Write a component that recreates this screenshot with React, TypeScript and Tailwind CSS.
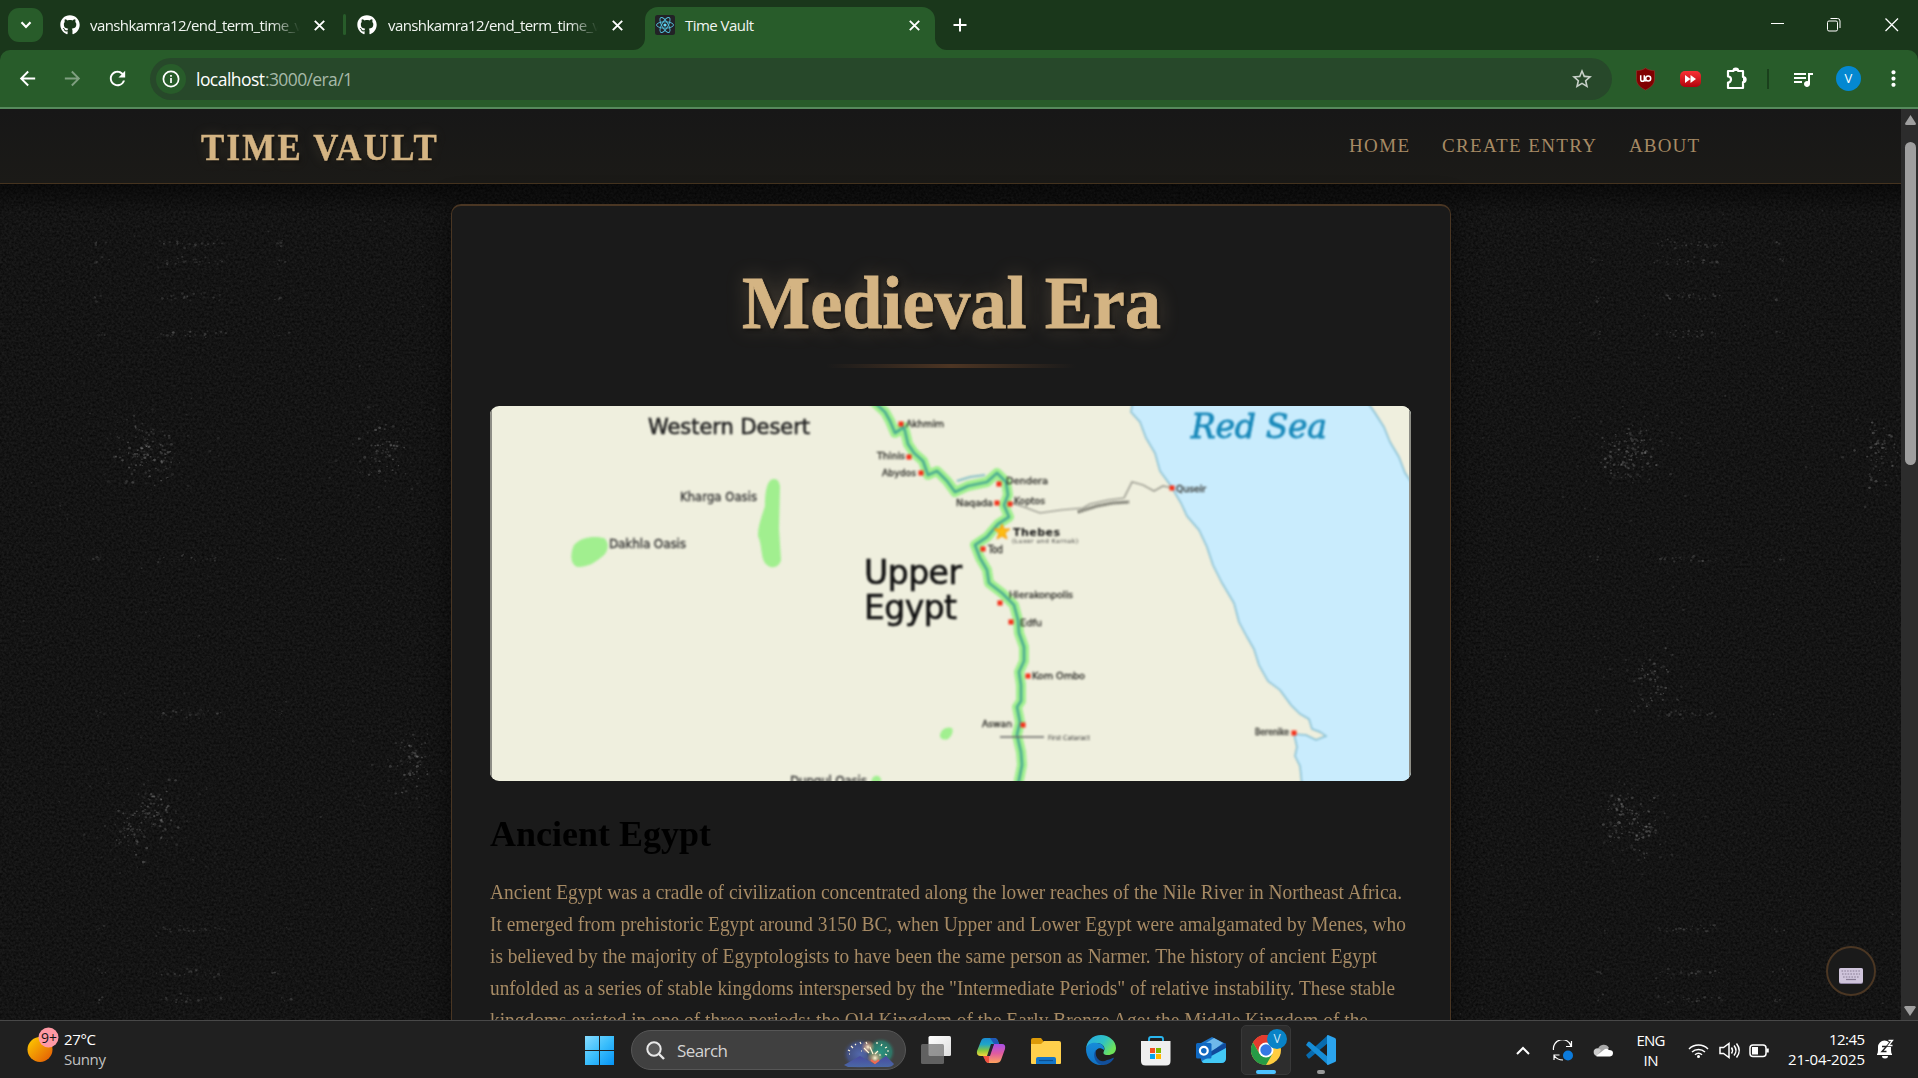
import React, { useLayoutEffect, useRef, useState } from 'react';
import { FaGithub } from 'react-icons/fa';
import {
  MdArrowBack, MdArrowForward, MdRefresh, MdStarBorder, MdOutlineExtension,
  MdQueueMusic, MdMoreVert,
} from 'react-icons/md';

/* One line of text fitted to a given width, by tracking or by horizontal scale. */
function Fit({ w, children, className = '', stretch = false }: { w: number; children: string; className?: string; stretch?: boolean }) {
  const ref = useRef<HTMLSpanElement>(null);
  const [style, setStyle] = useState<React.CSSProperties>({});
  useLayoutEffect(() => {
    const n = ref.current!.offsetWidth;
    const real = ref.current!.getBoundingClientRect().width || n;
    if (stretch) setStyle({ transform: `scaleX(${w / real})` });
    else setStyle({ letterSpacing: `${(w - real) / (children.length - 1)}px` });
  }, []);
  return (
    <span className={`block whitespace-nowrap ${className}`} style={{ width: w }}>
      <span ref={ref} className="inline-block origin-left align-top" style={style}>{children}</span>
    </span>
  );
}

const CloseX = ({ className = '' }: { className?: string }) => (
  <svg className={className} width="11" height="11" viewBox="0 0 11 11" stroke="#fff" strokeWidth="1.9" fill="none">
    <path d="M.8.8 10.2 10.2M10.2.8.8 10.2" />
  </svg>
);

function TabStrip() {
  return (
    <div className="flex h-[50px] bg-[#1a371b] text-[15px] text-[#f1f5f1]">
      <div className="ml-2 mt-2 flex h-[34px] w-[35px] items-center justify-center rounded-[11px] bg-[#285c2a]">
        <svg width="12" height="8" viewBox="0 0 12 8" fill="none" stroke="#fff" strokeWidth="2.2"><path d="M1.5 1.2 6 5.9l4.500-4.700" /></svg>
      </div>
      <div className="ml-[17px] flex w-[283px] items-center">
        <FaGithub size={20} color="#fff" />
        <div className="ml-[10px] w-[210px] overflow-hidden leading-[50px] [mask-image:linear-gradient(to_right,black_86%,transparent)]">
          <Fit w={212}>vanshkamra12/end_term_time_v</Fit>
        </div>
        <CloseX className="ml-[14px]" />
      </div>
      <div className="mt-[14px] h-[21px] w-[3px] rounded bg-[#285c2a]" />
      <div className="ml-[11px] flex w-[278px] items-center">
        <FaGithub size={20} color="#fff" />
        <div className="ml-[11px] w-[210px] overflow-hidden leading-[50px] [mask-image:linear-gradient(to_right,black_86%,transparent)]">
          <Fit w={212}>vanshkamra12/end_term_time_v</Fit>
        </div>
        <CloseX className="ml-[14px]" />
      </div>
      <div className="relative ml-[10px] mt-[7px] flex h-[43px] w-[290px] items-start rounded-t-[13px] bg-[#285c2a]">
        <svg className="absolute -left-3 bottom-0" width="12" height="12"><path d="M12 0A12 12 0 0 1 0 12H12Z" fill="#285c2a" /></svg>
        <svg className="absolute -right-3 bottom-0" width="12" height="12"><path d="M0 0A12 12 0 0 0 12 12H0Z" fill="#285c2a" /></svg>
        <svg className="ml-[10px] mt-2" width="20" height="20" viewBox="0 0 20 20" fill="none" stroke="#53c1de" strokeWidth=".9">
          <rect width="20" height="20" rx="2.500" fill="#222226" stroke="none" />
          <ellipse cx="10" cy="10" rx="8.500" ry="3.200" />
          <ellipse cx="10" cy="10" rx="8.500" ry="3.200" transform="rotate(60 10 10)" />
          <ellipse cx="10" cy="10" rx="8.500" ry="3.200" transform="rotate(120 10 10)" />
          <circle cx="10" cy="10" r="1.600" fill="#61dafb" stroke="none" />
        </svg>
        <Fit w={69} className="ml-[10px] leading-[36px]">Time Vault</Fit>
        <CloseX className="ml-[155px] mt-[13px]" />
      </div>
      <svg className="ml-[18px] mt-[18px]" width="14" height="14" stroke="#fff" strokeWidth="2"><path d="M7 .5v13M.5 7h13" /></svg>
      <svg className="ml-[804px] mt-[17px]" width="128" height="15" fill="none" stroke="#fff">
        <path d="M0 6.500h13" />
        <rect x="56.500" y="4" width="10" height="10" rx="1.500" />
        <path d="M59.500 1.500h7a2.500 2.500 0 0 1 2.500 2.500v7" />
        <path d="M114.500 1.500l12.500 12.500M127 1.500 114.500 14" strokeWidth="1.300" />
      </svg>
    </div>
  );
}

function Toolbar() {
  return (
    <div className="h-[59px] bg-[#1a371b]">
      <div className="flex h-[59px] items-start rounded-t-[10px] border-b-2 border-[#568a5c] bg-[#285c2a] text-white">
        <div className="flex h-[57px] w-[150px] items-center gap-[22px] pl-4">
          <MdArrowBack size={23} />
          <MdArrowForward size={23} color="#7f9f80" />
          <MdRefresh size={23} />
        </div>
        <div className="mt-2 flex h-[42px] w-[1462px] items-center rounded-full bg-[#27482a]">
          <div className="ml-[6px] flex h-[30px] w-[30px] items-center justify-center rounded-full bg-[#285c2a]">
            <svg width="18" height="18" viewBox="0 0 18 18" fill="none" stroke="#fff" strokeWidth="1.700"><circle cx="9" cy="9" r="7.600" /><path d="M9 8v5M9 5v1.700" /></svg>
          </div>
          <div className="ml-[10px] flex text-[17.5px] leading-[42px]">
            <Fit w={69}>localhost</Fit>
            <Fit w={88} className="text-[#a6b9a8]">:3000/era/1</Fit>
          </div>
          <MdStarBorder size={24} color="#c7d0c8" className="ml-auto mr-[18px]" />
        </div>
        <div className="flex h-[57px] items-center">
          <svg className="ml-6" width="19" height="24" viewBox="0 0 19 24"><path d="M9.500 1C7 3 3.500 3.700.5 3.700V12c0 5.500 4 8.500 9 11 5-2.500 9-5.500 9-11V3.700C15.500 3.700 12 3 9.500 1Z" fill="#800000" stroke="#a33" strokeWidth=".5" /><path d="M4.700 8.200v4.300a1.600 1.600 0 0 0 3.600 0V8.200M8.300 13.800h2" fill="none" stroke="#fff" strokeWidth="1.500" /><circle cx="12.200" cy="11.500" r="2.500" fill="none" stroke="#fff" strokeWidth="1.500" /></svg>
          <div className="ml-[25px] flex h-[16px] w-[21px] items-center justify-center rounded-[5px] bg-gradient-to-b from-[#fa3034] to-[#b0000a]">
            <svg width="11" height="8" fill="#fff"><path d="M0 0 5.500 4 0 8ZM5.500 0 11 4 5.500 8Z" /></svg>
          </div>
          <svg className="ml-[25px]" width="22" height="23" viewBox="0 0 22 23"><path d="M2 4h5.500a2.300 2.300 0 0 1 4.600 0H17v6a2.600 2.600 0 0 1 0 5.200V21H2v-5.500a3 3 0 0 0 0-6Z" fill="none" stroke="#fff" strokeWidth="2.200" strokeLinejoin="round" /><path d="M7.500 4a2.300 2.300 0 0 1 4.600 0ZM17 10a2.600 2.600 0 0 1 0 5.200Z" fill="#fff" /></svg>
          <div className="ml-[19px] h-5 w-[2px] bg-[#1a401c]" />
          <MdQueueMusic size={24} className="ml-[22px]" />
          <div className="ml-[21px] h-[25px] w-[25px] rounded-full bg-[#0488d1] text-center text-[13px] leading-[25px]">V</div>
          <MdMoreVert size={25} className="ml-[20px]" />
        </div>
      </div>
    </div>
  );
}

/* Small light scratches scattered around each cluster of the dark wall. */
function specks() {
  let s = 41;
  const rnd = () => ((s = (s * 16807) % 2147483647) / 2147483647);
  const out: { x: number; y: number; r: number; o: number }[] = [];
  const cluster = (cx: number, cy: number, sx: number, sy: number, n: number, o: number) => {
    for (let i = 0; i < n; i++) {
      out.push({
        x: cx + (rnd() + rnd() + rnd() - 1.5) * sx,
        y: cy + (rnd() + rnd() + rnd() - 1.5) * sy,
        r: 0.5 + rnd() * 0.8,
        o: o * (0.4 + rnd() * 0.6),
      });
    }
  };
  const spots = [
    [135, 342], [158, 348], [383, 343], [135, 720], [158, 705], [411, 654],
    [1640, 342], [1618, 350], [1878, 343], [1640, 718], [1622, 705], [1650, 574],
  ];
  spots.forEach(([x, y]) => { cluster(x, y, 18, 28, 55, 0.3); cluster(x, y, 60, 55, 35, 0.14); });
  for (const mx of [190, 1688]) {
    for (const y of [135, 152, 188, 225, 450, 605, 820, 864, 890]) {
      for (const dx of [4, 14, 26, 90]) {
        cluster(mx - dx, y, 8, 4, 4, 0.2);
        cluster(mx + dx, y, 8, 4, 4, 0.2);
      }
    }
  }
  for (let i = 0; i < 300; i++) out.push({ x: i % 2 ? rnd() * 450 : 1455 + rnd() * 445, y: 75 + rnd() * 830, r: 0.4 + rnd() * 0.6, o: rnd() * 0.16 });
  return out;
}
const SPECKS = specks();

function Wall() {
  return (
    <svg className="absolute inset-0" width="1901" height="911">
      <defs>
        <filter id="grain" x="0" y="0" width="100%" height="100%" colorInterpolationFilters="sRGB">
          <feTurbulence type="fractalNoise" baseFrequency=".42" numOctaves="2" seed="7" />
          <feColorMatrix values=".12 0 0 0 .018  .12 0 0 0 .018  .12 0 0 0 .018  0 0 0 0 1" />
        </filter>
        <linearGradient id="shade" x1="0" y1="0" x2="0" y2="1"><stop offset="0" stopColor="#000" stopOpacity=".5" /><stop offset="1" stopColor="#000" stopOpacity="0" /></linearGradient>
      </defs>
      <rect width="1901" height="911" filter="url(#grain)" />
      {SPECKS.map((p, i) => <ellipse key={i} cx={p.x} cy={p.y} rx={p.r * 1.2} ry={p.r} fill="#b5b5b5" opacity={p.o} />)}
      <rect y="75" width="1901" height="30" fill="url(#shade)" />
    </svg>
  );
}

const NILE = 'M872 400 885 412 890 421 895 433 904 427 908 444 914 453 923 461 928 475 937 471 947 481 955 492 968 486 987 482 997 473 1006 482 1008 495 1004 505 1009 517 998 524 987 537 975 545 980 558 987 570 989 583 1002 593 1014 605 1018 620 1019 633 1024 647 1024 661 1019 672 1021 685 1021 701 1017 707 1020 722 1017 735 1021 752 1022 765 1018 785';
const COAST = 'M1133 400 1131 412 1140 422 1146 438 1155 453 1160 471 1171 486 1181 503 1187 516 1199 530 1207 547 1213 565 1222 583 1234 603 1239 622 1247 637 1254 649 1259 665 1268 681 1280 690 1291 705 1300 714 1309 719 1312 729 1320 732 1326 736 1316 740 1306 735 1294 734 1297 747 1295 756 1300 766 1302 785';

const TOWNS: [string, number, number, number, number, number, number][] = [
  // name, label x, baseline y, label width, size, dot x, dot y
  ['Akhmim', 906, 427, 38, 9, 901, 424],
  ['Thinis', 877, 459, 28, 9, 909, 457],
  ['Abydos', 882, 476, 34, 9, 921, 473],
  ['Dendera', 1006, 484, 42, 9, 999, 484],
  ['Naqada', 956, 506, 37, 9, 997, 503],
  ['Koptos', 1014, 504, 31, 9, 1010, 504],
  ['Tod', 988, 553, 15, 10, 983, 549],
  ['Hierakonpolis', 1009, 598, 64, 9, 1000, 603],
  ['Edfu', 1020, 626, 22, 9, 1011, 622],
  ['Kom Ombo', 1032, 679, 53, 9, 1028, 676],
  ['Aswan', 982, 727, 30, 9, 1023, 725],
  ['Berenike', 1255, 735, 34, 9, 1294, 733],
  ['Quseir', 1176, 492, 30, 9, 1172, 488],
];

function EgyptMap() {
  return (
    <svg className="mt-[38px] block h-[375px] w-[921px] rounded-[9px]" viewBox="490 406 921 375" fontFamily='"DejaVu Sans", sans-serif'>
      <rect x="490" y="406" width="921" height="375" fill="#efefde" />
      <g className="blur-[0.8px]">
        <path d={`${COAST} 1425 785 1425 400Z`} fill="#c9ecfd" />
        <path d={COAST} fill="none" stroke="#83bdd2" strokeWidth="1.500" />
        <path d="M1366 400 1375 413 1384 427 1390 442 1399 457 1405 473 1412 483V400Z" fill="#efefde" stroke="#83bdd2" strokeWidth="1.500" />
        <path d="M774 479c-7 0-9 13-9 27-3 10-7 19-7 30 5 11 2 24 9 29 6 5 13 1 14-5l-2-31 1-43c-1-4-2-7-6-7Z" fill="#a1ef8f" />
        <path d="M574 545c8-9 21-9 30-7 6 5 4 13 0 17-8 7-15 12-26 12-8-2-8-13-4-22Z" fill="#a1ef8f" />
        <path d="M940 735c1-6 7-9 12-7 2 4-1 9-4 11-3 1-8 1-8-4ZM871 785c0-7 3-10 7-9 4 2 4 5 1 9Z" fill="#a1ef8f" />
        <path d={NILE} fill="none" stroke="#a1ef8f" strokeWidth="10" strokeLinejoin="round" />
        <path d={NILE} fill="none" stroke="#4dad91" strokeWidth="2.800" strokeLinejoin="round" />
        <path d="M957 481 970 477 985 475" fill="none" stroke="#86bfc5" strokeWidth="2" />
        <path d="M1012 503 1024 507 1040 513 1061 510 1083 508 1090 504 1108 500 1124 498 1129 488 1132 482 1143 485 1154 491 1163 486 1172 488" fill="none" stroke="#83837a" strokeWidth="1.200" />
        <path d="M1078 512 1097 506 1113 503 1129 502" fill="none" stroke="#55554d" strokeWidth="3" strokeDasharray="2 1" />
        <path d="M1000 737h44" stroke="#666" strokeWidth="1.300" />
        {TOWNS.map(([name, x, y, w, size, dx, dy]) => (
          <g key={name}>
            <rect x={dx - 2.5} y={dy - 2.5} width="5" height="5" fill="#f5301a" />
            <text x={x} y={y} fontSize={size} textLength={w} lengthAdjust="spacingAndGlyphs" fill="#33332e" stroke="#33332e" strokeWidth=".35">{name}</text>
          </g>
        ))}
        <path d="m1002 524 2 5 6 0-5 4 2 6-5-3-5 3 2-6-5-4 6 0Z" fill="#fdbc12" stroke="#f59a15" />
        <g>
          <text x="1013" y="536" fontSize="11" fontWeight="bold" textLength="47" fill="#111">Thebes</text>
          <text x="1012" y="543" fontSize="6" textLength="66" fill="#333">(Luxor and Karnak)</text>
          <text x="1048" y="740" fontSize="6.500" textLength="42" fill="#333">First Cataract</text>
          <text x="648" y="434" fontSize="21" textLength="162" lengthAdjust="spacingAndGlyphs" fill="#222" stroke="#222" strokeWidth=".6">Western Desert</text>
          <g fill="#333" stroke="#333" strokeWidth=".35">
            <text x="680" y="501" fontSize="11.500" textLength="77">Kharga Oasis</text>
            <text x="609" y="548" fontSize="12" textLength="77">Dakhla Oasis</text>
            <text x="790" y="785" fontSize="12" textLength="77">Dunqul Oasis</text>
          </g>
          <g fill="#111" stroke="#111" strokeWidth=".6">
            <text x="864" y="584" fontSize="33" textLength="98">Upper</text>
            <text x="864" y="619" fontSize="33" textLength="93">Egypt</text>
          </g>
          <text x="1191" y="438" fontSize="33" textLength="136" fill="#1989ba" stroke="#1989ba" strokeWidth=".8" fontFamily='"DejaVu Serif", serif' fontStyle="italic">Red Sea</text>
        </g>
      </g>
      <path d="M491 406v375M1410 406v375" stroke="#8e8e86" strokeWidth="2" />
    </svg>
  );
}

const LINES: [string, number][] = [
  ['Ancient Egypt was a cradle of civilization concentrated along the lower reaches of the Nile River in Northeast Africa.', 912],
  ['It emerged from prehistoric Egypt around 3150 BC, when Upper and Lower Egypt were amalgamated by Menes, who', 916],
  ['is believed by the majority of Egyptologists to have been the same person as Narmer. The history of ancient Egypt', 887],
  ['unfolded as a series of stable kingdoms interspersed by the "Intermediate Periods" of relative instability. These stable', 905],
  ['kingdoms existed in one of three periods: the Old Kingdom of the Early Bronze Age; the Middle Kingdom of the', 878],
];

function Page() {
  return (
    <div className="relative h-[911px] w-[1901px] overflow-hidden font-['Liberation_Serif',serif]">
      <Wall />
      <nav className="relative flex h-[75px] items-start justify-between border-b border-[#45331f] bg-gradient-to-b from-[#171717] to-[#1b1a17] pl-[201px] pr-[202px]">
        <Fit w={238} stretch className="mt-[14px] text-[38px] font-bold leading-[48px] tracking-[2.5px] text-[#d4b483] [-webkit-text-stroke:0.5px_#d4b483] [text-shadow:2px_2px_4px_rgba(0,0,0,.5),0_0_14px_rgba(212,180,131,.2)]">TIME VAULT</Fit>
        <div className="mt-[22px] flex gap-[33px] text-[19px] leading-[30px] text-[#a68a64]">
          <Fit w={60}>HOME</Fit>
          <Fit w={154}>CREATE ENTRY</Fit>
          <Fit w={70}>ABOUT</Fit>
        </div>
      </nav>
      <main className="relative ml-[451px] mt-5 flex h-[900px] w-[1000px] flex-col rounded-[10px] border border-t-2 border-[#4a3623] bg-[#1a1a1a] px-[38px] shadow-[0_0_25px_rgba(0,0,0,.5)]">
        <h1 className="mt-[52px] flex justify-center text-[75px] font-bold leading-[90px] text-[#d4b483] [-webkit-text-stroke:0.8px_#d4b483] [text-shadow:2px_2px_4px_rgba(0,0,0,.6),0_0_22px_rgba(212,180,131,.3)]">
          <Fit w={419} stretch>Medieval Era</Fit>
        </h1>
        <div className="mx-auto mt-4 h-1 w-[250px] bg-gradient-to-r from-transparent via-[#4d3523] to-transparent" />
        <EgyptMap />
        <h2 className="mt-[31px] text-[36px] font-bold leading-[44px] text-black"><Fit w={221} stretch>Ancient Egypt</Fit></h2>
        <div className="mt-5 text-[21px] leading-8 text-[#a68a64]">
          {LINES.map(([t, w]) => <Fit key={t} w={w} stretch>{t}</Fit>)}
        </div>
      </main>
      <div className="absolute left-[1826px] top-[837px] flex h-[50px] w-[50px] items-center justify-center rounded-full border-2 border-[#4a3623] bg-[#1a1a1a] pt-[10px]">
        <svg width="24" height="17"><rect width="24" height="16" rx="2" fill="#8d819f" /><rect width="24" height="15" rx="2" fill="#cfc4db" /><path d="M2.500 3h19M3 6h18M4 9h16" stroke="#887c94" strokeWidth="1.200" strokeDasharray="1.600 1.200" /><path d="M7 11.500h10" stroke="#887c94" strokeWidth="1.200" /></svg>
      </div>
    </div>
  );
}

function Scrollbar() {
  return (
    <div className="flex w-[17px] flex-col items-center bg-[#2c2c2c]">
      <svg className="ml-px mt-[6px]" width="11" height="10"><path d="M5.500 0 11 8.500Q11 10 9.500 10h-8Q0 10 0 8.500Z" fill="#9f9f9f" /></svg>
      <div className="ml-px mt-[17px] h-[323px] w-[11px] rounded-full bg-[#9f9f9f]" />
      <svg className="mb-1 ml-px mt-auto" width="12" height="10"><path d="M6 10 .3 1.500Q0 0 1.500 0h9Q12 0 11.700 1.500Z" fill="#9f9f9f" /></svg>
    </div>
  );
}

function Fireworks() {
  return (
    <svg className="ml-auto mr-[10px] mt-[7px]" width="53" height="30" viewBox="0 0 53 30">
      <defs>
        <radialGradient id="fa"><stop offset="0" stopColor="#5268ac" /><stop offset=".7" stopColor="#43507f" /><stop offset="1" stopColor="#404040" stopOpacity="0" /></radialGradient>
        <radialGradient id="fb"><stop offset="0" stopColor="#299380" /><stop offset=".7" stopColor="#307365" /><stop offset="1" stopColor="#404040" stopOpacity="0" /></radialGradient>
        <radialGradient id="fc"><stop offset="0" stopColor="#fff6d8" /><stop offset=".5" stopColor="#e6a87a" stopOpacity=".5" /><stop offset="1" stopColor="#e6a87a" stopOpacity="0" /></radialGradient>
        <linearGradient id="fm" x2="0" y2="1"><stop stopColor="#474aa0" /><stop offset="1" stopColor="#4b68a5" /></linearGradient>
      </defs>
      <ellipse cx="18" cy="16" rx="18" ry="16" fill="url(#fa)" />
      <ellipse cx="39" cy="14" rx="15" ry="15" fill="url(#fb)" />
      <circle cx="26" cy="9" r="7" fill="url(#fc)" /><circle cx="33" cy="20" r="8" fill="url(#fc)" />
      <path d="M6 12l2 1M9 8l2 2M13 6l1 1M18 4l1 2M24 4l1 2M35 4v2M40 6l-1 2M45 9l-2 1M47 13h-2M45 17l-2-1M7 16h1M22 10l5 5M28 9l3 7M36 13l-3 3M37 17h2M19 13h1" stroke="#fff5d7" strokeWidth="1.200" />
      <path d="M2 27 18 18l14 8 12-8 8 8q-2 3-6 3H6Z" fill="url(#fm)" /><path d="m29 22 4 3 4-3" stroke="#f26954" strokeWidth="2" fill="none" />
    </svg>
  );
}

function AppIcons() {
  return (
    <>
      <svg className="ml-[15px] mt-[15px]" width="30" height="28"><defs><linearGradient id="tv" x2="1" y2="1"><stop stopColor="#fff" /><stop offset="1" stopColor="#dedede" /></linearGradient></defs><rect x="7.500" width="22.500" height="20" rx="1.500" fill="url(#tv)" /><rect y="8" width="23" height="20" rx="1.500" fill="#777" opacity=".75" /></svg>
      <svg className="ml-[25px] mt-[15px]" width="30" height="28" viewBox="0 0 30 28">
        <defs>
          <linearGradient id="ca" x2="0" y2="1"><stop stopColor="#1b8bd2" /><stop offset=".35" stopColor="#1fa5c9" /><stop offset=".7" stopColor="#8ac73c" /><stop offset="1" stopColor="#f6d53c" /></linearGradient>
          <linearGradient id="cb" x2="0" y2="1"><stop stopColor="#a74fe8" /><stop offset=".5" stopColor="#e05c9f" /><stop offset="1" stopColor="#ffa35d" /></linearGradient>
        </defs>
        <path d="M9 2h9q3 0 4 3l1 3h-5L13 20H5Q0 20 1 15L5 5q1-3 4-3Z" fill="url(#ca)" />
        <path d="M14 2h4q3 0 4 3l1 3h-5Z" fill="#2058b8" />
        <path d="M18 8h8q4 0 3 5l-4 11q-1 3-5 3h-7q-3 0-4-4l-1-3h5Z" fill="url(#cb)" />
        <path d="M13 20H7l2 4q1 3 4 3Z" fill="#ef5141" /><path d="M18 8h-3l-4 12h3Z" fill="#242430" />
      </svg>
      <svg className="ml-[25px] mt-4" width="30" height="28" viewBox="0 0 30 28"><path d="M0 3Q0 1 2 1h8l3 4h15q2 0 2 2v19H0Z" fill="#dc9a08" /><path d="M0 7h10l3-3h15q2 0 2 2v20q0 1-1 1H1q-1 0-1-1Z" fill="#ffd04c" /><path d="M5 27v-5q0-2 2-2h16q2 0 2 2v5Z" fill="#1476c9" /><path d="M8 23.500h14" stroke="#0c4f91" strokeWidth="1.200" /></svg>
      <svg className="ml-[25px] mt-[14px]" width="30" height="30" viewBox="0 0 30 30">
        <defs><linearGradient id="ea" x2="1" y2=".5"><stop stopColor="#26a8e8" /><stop offset=".6" stopColor="#2fc2c3" /><stop offset="1" stopColor="#6ee35a" /></linearGradient><linearGradient id="eb" x2="0" y2="1"><stop stopColor="#168bd9" /><stop offset="1" stopColor="#1172c4" /></linearGradient></defs>
        <path d="M0 15C0 6 7 0 15 0s15 6 15 13c0 5-4 7-8 7-5 0-5-2-4-4 2-4-2-8-7-8C5 8 0 11 0 15Z" fill="url(#ea)" />
        <path d="M0 14c1-5 6-7 11-6 5 0 8 4 7 7-6-5-11 2-8 7 2 5 6 7 9 7.500C8 32 0 24 0 14Z" fill="url(#eb)" />
        <path d="M10 15c-2 8 5 14 11 10 4 0 6-3 7-2-2 4-6 7-11 7-8 0-11-11-7-15Z" fill="#124f9b" />
      </svg>
      <svg className="ml-[25px] mt-[15px]" width="30" height="30" viewBox="0 0 30 30"><path d="M8 6V3q0-2 2-2h10q2 0 2 2v3" fill="none" stroke="#28b6ef" strokeWidth="1.800" /><path d="M0 5h29.500v20q0 4.500-4.500 4.500H4.500Q0 29.500 0 25Z" fill="#efefef" /><path d="M9 12h5v5H9Z" fill="#f25022" /><path d="M15 12h5v5h-5Z" fill="#7fba00" /><path d="M9 18h5v5H9Z" fill="#00a4ef" /><path d="M15 18h5v5h-5Z" fill="#ffb900" /></svg>
      <svg className="ml-[25px] mt-4" width="30" height="27" viewBox="0 0 30 27"><path d="M5 6 16 0l14 7v14q0 5-5 5H9q-4 0-4-4Z" fill="#1b73c7" /><path d="M10 6 18 1l9 5-13 10Z" fill="#6fb9ea" /><path d="M14 15 29 6l1 1v4L16 20Z" fill="#104a9b" /><path d="M6 24 30 11v10q0 5-5 5H9q-3 0-3-2Z" fill="#43c8f4" /><rect y="6" width="15.500" height="15.500" rx="1.500" fill="#0f68c1" /><circle cx="7.800" cy="13.700" r="3.900" fill="none" stroke="#fff" strokeWidth="2.200" /></svg>
      <div className="relative ml-[15px] mt-1 flex h-[50px] w-[50px] flex-col items-center rounded-[5px] border border-[#383838] bg-[#2d2d2d]">
        <svg className="mt-[9px]" width="30" height="30" viewBox="0 0 30 30"><circle cx="15" cy="15" r="15" fill="#ffcd40" /><path d="M15 15 2 7.500A15 15 0 0 1 28 7.500Z" fill="#e33b2e" /><path d="M15 7.500H28A15 15 0 0 0 2 7.500l6.500 11Z" fill="#e33b2e" /><path d="M2 7.500A15 15 0 0 0 15 30l6.500-11.200-13 0Z" fill="#269b46" /><circle cx="15" cy="15" r="7.500" fill="#fff" /><circle cx="15" cy="15" r="5.700" fill="#3478e5" /></svg>
        <div className="mt-[5px] h-1 w-5 rounded-full bg-[#4cc2ff]" />
        <div className="absolute right-[3px] top-[3px] h-5 w-5 rounded-full bg-[#0883c7] text-center text-[12px] leading-5 text-[#d1e7f5]">V</div>
      </div>
      <div className="ml-[15px] mt-[14px] flex w-[30px] flex-col items-center">
        <svg width="30" height="30" viewBox="0 0 30 30"><path d="M22 0 0 20l2 3q1 1 2 0L22 8Z" fill="#086bae" /><path d="M0 10 2 7q1-1 2 0l18 15v8Z" fill="#168dd7" /><path d="m22 0 7 3q1 .5 1 1.500v21q0 1-1 1.500l-7 3q-1 0-1-1V1q0-1 1-1Z" fill="#2ba4ee" /></svg>
        <div className="mt-[5px] h-1 w-2 rounded-full bg-[#999]" />
      </div>
    </>
  );
}

function Taskbar() {
  return (
    <div className="flex h-[58px] border-t border-[#484848] bg-[#202020] text-[15px] leading-5 text-white">
      <svg className="ml-[27px] mt-[6px]" width="32" height="36" viewBox="0 0 32 36"><defs><linearGradient id="sun" x2="1" y2="1"><stop stopColor="#ffd000" /><stop offset="1" stopColor="#e25506" /></linearGradient></defs><circle cx="13" cy="22.500" r="12.500" fill="url(#sun)" /><circle cx="21.500" cy="10.500" r="10" fill="#ff99a4" /><text x="14" y="16" fontSize="14.500" textLength="16" lengthAdjust="spacingAndGlyphs" fill="#151515" fontFamily='"Open Sans"'>9+</text></svg>
      <div className="ml-[5px] mt-[8px]">
        <Fit w={32}>27°C</Fit>
        <Fit w={42} className="text-[#c2c2c2]">Sunny</Fit>
      </div>
      <svg className="ml-[479px] mt-[15px]" width="29" height="29"><defs><linearGradient id="win" gradientUnits="userSpaceOnUse" x1="0" y1="0" x2="29" y2="29"><stop stopColor="#87dcff" /><stop offset=".5" stopColor="#3abefc" /><stop offset="1" stopColor="#0593f5" /></linearGradient></defs><path d="M0 0h14v14H0ZM15 0h14v14H15ZM0 15h14v14H0ZM15 15h14v14H15Z" fill="url(#win)" /></svg>
      <div className="ml-[17px] mt-[9px] flex h-10 w-[275px] rounded-full border border-[#565656] bg-[#404040]">
        <svg className="ml-[14px] mt-[10px]" width="19" height="19" fill="none" stroke="#e8e8e8"><circle cx="8" cy="8" r="6.700" fill="#595959" strokeWidth="2" /><path d="m13 13 5 5" strokeWidth="2.400" /></svg>
        <Fit w={51} className="ml-[12px] text-[17px] leading-[39px] text-[#d4d4d4]">Search</Fit>
        <Fireworks />
      </div>
      <AppIcons />
      <svg className="ml-[180px] mt-[25px]" width="14" height="9" fill="none" stroke="#fff" strokeWidth="2"><path d="M1 8 7 2l6 6" /></svg>
      <svg className="ml-[22px] mt-[19px]" width="22" height="22" fill="none" stroke="#fff" strokeWidth="1.200"><path d="M1.500 10A9 9 0 0 1 19 6M19.500 1v5.500H14M2 20v-5h5.500M2 15.500Q5 20 11 20" /><circle cx="16" cy="15.500" r="5" fill="#0c7bdc" stroke="none" /></svg>
      <svg className="ml-[19px] mt-[22px]" width="20" height="14"><path d="M5 6a6 6 0 0 1 11-1l-8 7H2Z" fill="#a8a8a8" /><path d="M4 13a4 4 0 0 1-2-7q3-2 6 1Z" fill="#ccc" /><path d="M3 13 12 6q2-1 4 1 4 0 4 3t-3 3.500H4Z" fill="#fff" /></svg>
      <div className="ml-6 mt-[9px] flex w-7 flex-col items-center"><Fit w={29}>ENG</Fit><Fit w={15}>IN</Fit></div>
      <svg className="ml-[23px] mt-[21px]" width="82" height="17" fill="none" stroke="#fff" strokeWidth="1.500">
        <path d="M1 7a13.500 13.500 0 0 1 19 0M4 10a9.500 9.500 0 0 1 13 0M7 12.700a5.300 5.300 0 0 1 7 0" /><circle cx="10.500" cy="14.500" r="1.500" fill="#fff" stroke="none" />
        <path d="M32 5.500h3.500L41 1.500v14l-5.500-4H32ZM43.500 5.500q2 3 0 6M46 3.500q4 5 0 10M48.500 1.500q5.500 7 0 14" />
        <rect x="62" y="3" width="16" height="11.500" rx="3" /><path d="M64 5h6v7.500h-6Z" fill="#fff" stroke="none" /><path d="M79.500 6.500v4" strokeWidth="2.500" />
      </svg>
      <div className="ml-[18px] mt-[8px] flex w-[77px] flex-col items-end"><Fit w={36}>12:45</Fit><Fit w={77}>21-04-2025</Fit></div>
      <svg className="ml-[11px] mt-[17px]" width="18" height="22"><path d="M1 16q1-1 1-4V9a6.500 6.500 0 0 1 13 0v3q0 3 1 4v1H1ZM6 18h6q0 2.500-3 2.500T6 18Z" fill="#fff" /><path d="M6 8.500h4.500l-4.500 5h4.500" fill="none" stroke="#202020" strokeWidth="1.400" /><path d="M12.500 2.500h4l-4 5h4" fill="none" stroke="#202020" strokeWidth="3" /><path d="M12.500 2.500h4l-4 5h4" fill="none" stroke="#fff" strokeWidth="1.300" /></svg>
    </div>
  );
}

export default function App() {
  return (
    <div className="flex h-[1078px] w-[1918px] flex-col overflow-hidden font-['Open_Sans',sans-serif] [&_svg]:shrink-0">
      <TabStrip />
      <Toolbar />
      <div className="flex h-[911px]">
        <Page />
        <Scrollbar />
      </div>
      <Taskbar />
    </div>
  );
}
